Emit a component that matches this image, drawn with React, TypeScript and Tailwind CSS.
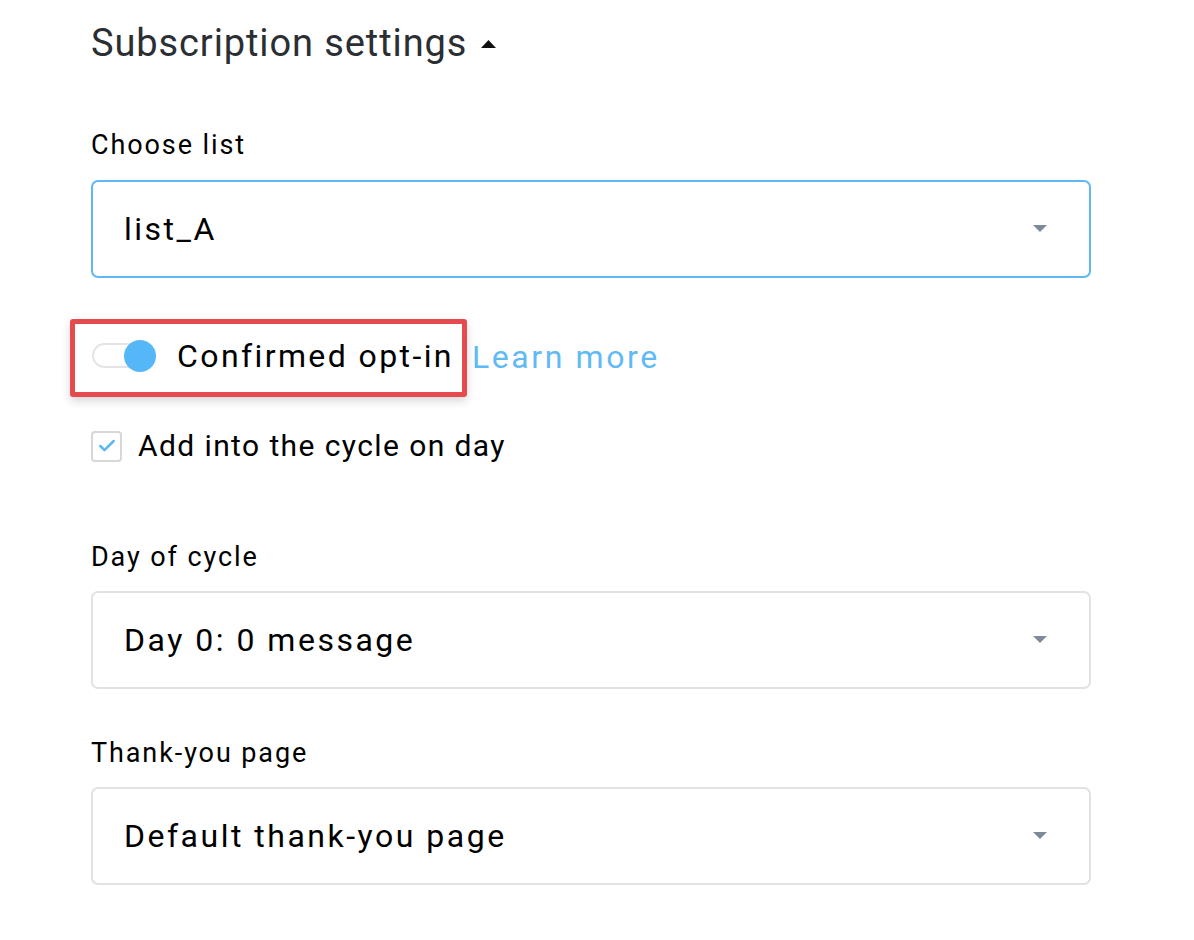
import { Check } from 'lucide-react';

function Caret() {
  return (
    <svg width="16" height="8" viewBox="0 0 16 8" className="shrink-0">
      <path d="M1 0h14L8 7z" fill="#7d8a99" />
    </svg>
  );
}

interface SelectBoxProps {
  value: string;
  focused?: boolean;
}

function SelectBox({ value, focused }: SelectBoxProps) {
  return (
    <div
      className={`flex items-center justify-between h-[98px] pl-[31px] pr-[41px] rounded-[7px] border-2 bg-white ${
        focused ? 'border-[#5fb8f4]' : 'border-[#e2e2e2]'
      }`}
    >
      <span className="text-[32px] leading-[38px] text-black tracking-[2.5px]">{value}</span>
      <Caret />
    </div>
  );
}

function Label({ children }: { children: string }) {
  return <div className="text-[27px] leading-[32px] text-black tracking-[1.9px]">{children}</div>;
}

export default function App() {
  return (
    <div className="min-h-[940px] w-[1194px] bg-white font-['Roboto','Liberation_Sans',sans-serif]">
      <div className="pl-[91px] pr-[103px] pt-[20px]">
        {/* Header */}
        <div className="flex items-center gap-[14px] h-[46px]">
          <h2 className="text-[38px] leading-none text-[#2b2f33] tracking-[0.9px]">Subscription settings</h2>
          <svg width="15" height="8" viewBox="0 0 15 8" className="mt-[1px]">
            <path d="M7.5 0L15 8H0z" fill="#111" />
          </svg>
        </div>

        {/* Choose list */}
        <div className="mt-[63px]">
          <Label>Choose list</Label>
        </div>
        <div className="mt-[19px]">
          <SelectBox value="list_A" focused />
        </div>

        {/* Confirmed opt-in */}
        <div className="mt-[41px] flex items-center">
          <div className="-ml-[21px] flex items-center h-[78px] pl-[17px] pr-[8px] pb-[5px] border-[5px] border-[#e54a4e] rounded-[3px] shadow-[0_4px_10px_rgba(0,0,0,0.16)]">
            <div className="relative w-[64px] h-[32px] flex items-center">
              <div className="w-[61px] h-[25px] rounded-full border-2 border-[#e4e4e4] bg-white" />
              <div className="absolute right-0 top-0 w-[32px] h-[32px] rounded-full bg-[#56b7f8]" />
            </div>
            <span className="ml-[21px] text-[32px] leading-[38px] text-black tracking-[2.4px]">Confirmed opt-in</span>
          </div>
          <a className="ml-[5px] pb-[2px] text-[32px] leading-[38px] text-[#5fbaf5] tracking-[2.6px]">Learn more</a>
        </div>

        {/* Checkbox */}
        <div className="mt-[33px] flex items-center h-[32px] gap-[16px]">
          <div className="w-[31px] h-[31px] rounded-[4px] border-2 border-[#d7d7d7] flex items-center justify-center">
            <Check size={20} strokeWidth={3} color="#5bb8f7" />
          </div>
          <span className="text-[30px] leading-[36px] text-black tracking-[1.4px]">Add into the cycle on day</span>
        </div>

        {/* Day of cycle */}
        <div className="mt-[79px]">
          <Label>Day of cycle</Label>
        </div>
        <div className="mt-[18px]">
          <SelectBox value="Day 0: 0 message" />
        </div>

        {/* Thank-you page */}
        <div className="mt-[48px]">
          <Label>Thank-you page</Label>
        </div>
        <div className="mt-[18px]">
          <SelectBox value="Default thank-you page" />
        </div>
      </div>
    </div>
  );
}
